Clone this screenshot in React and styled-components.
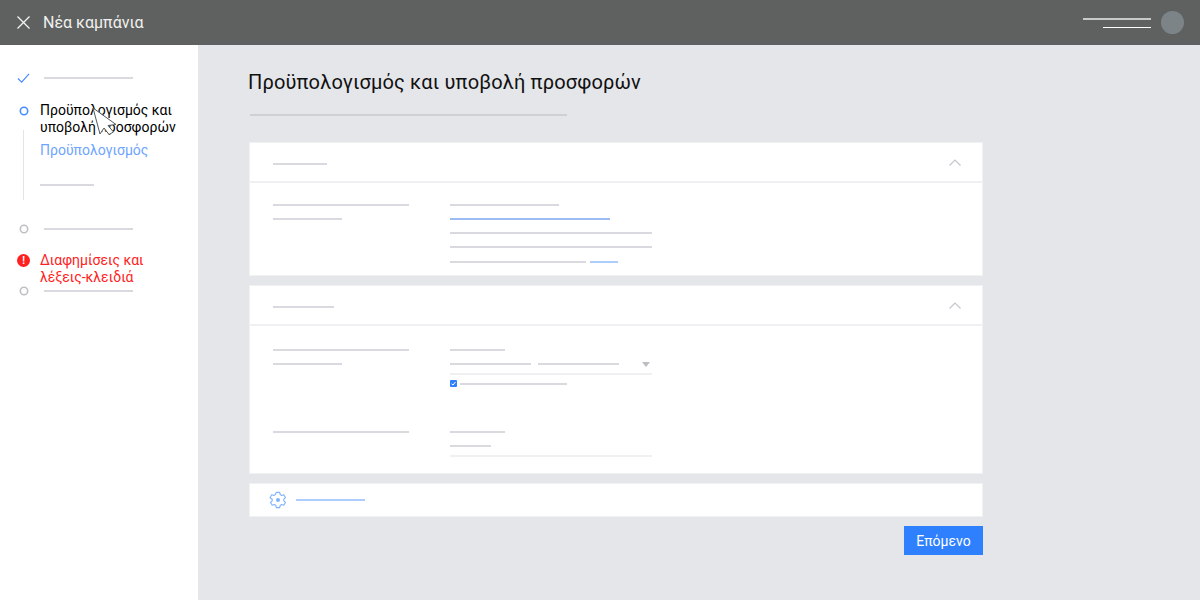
import React from 'react';
import styled, { createGlobalStyle } from 'styled-components';

const GlobalStyle = createGlobalStyle`
  html, body { margin: 0; padding: 0; height: 100%; }
  body { font-family: Roboto, "Liberation Sans", sans-serif; background: #e5e6ea; }
`;

const Page = styled.div`
  position: relative;
  width: 1200px;
  height: 600px;
  overflow: hidden;
  display: flex;
  flex-direction: column;
`;

const TopBar = styled.header`
  height: 45px;
  flex: none;
  background: #5f6160;
  display: flex;
  align-items: center;
  padding: 0 16px;
`;

const BarTitle = styled.div`
  margin-left: 12px;
  color: #f0f0ee;
  font-size: 16px;
`;

const Account = styled.div`
  margin-left: auto;
  display: flex;
  align-items: center;
  gap: 10px;
`;

const AccountLines = styled.div`
  display: flex;
  flex-direction: column;
  align-items: flex-end;
  gap: 7px;
`;

const Avatar = styled.div`
  width: 23px;
  height: 23px;
  border-radius: 50%;
  background: #7d8487;
`;

const Body = styled.div`
  flex: 1;
  display: flex;
  min-height: 0;
`;

const Sidebar = styled.aside`
  width: 198px;
  flex: none;
  background: #fff;
  padding: 23px 0 0 17px;
  box-sizing: border-box;
`;

const Step = styled.div`
  display: flex;
  align-items: ${p => (p.$multi ? 'flex-start' : 'center')};
  height: ${p => (p.$multi ? 34 : 20)}px;
  margin-top: ${p => p.$top || 0}px;
`;

const StepIcon = styled.div`
  width: 13px;
  height: ${p => (p.$multi ? 17 : 20)}px;
  flex: none;
  display: flex;
  align-items: center;
  justify-content: center;
`;

const ErrorDot = styled.span`
  width: 13px;
  height: 13px;
  border-radius: 50%;
  background: #ff2121;
  color: #fff;
  font-size: 10px;
  font-weight: 700;
  line-height: 13px;
  text-align: center;
`;

const StepLabel = styled.div`
  margin-left: 10px;
  font-size: 14px;
  line-height: 17px;
  color: ${p => p.$color || '#000'};
  white-space: nowrap;
`;

const StepLine = styled.div`
  margin-left: 14px;
`;

const SubSteps = styled.div`
  margin: -6px 0 0 6px;
  height: 70px;
  border-left: 1px solid #e3e4e8;
  padding-left: 16px;
  box-sizing: border-box;
`;

const SubLabel = styled.div`
  padding-top: 12px;
  font-size: 14px;
  line-height: 17px;
  color: #6ea4ff;
  margin-bottom: 25px;
`;

const Main = styled.main`
  flex: 1;
  padding: 24px 0 0 50px;
  min-width: 0;
`;

const Title = styled.h1`
  margin: 0 0 18px;
  font-size: 20px;
  font-weight: 400;
  line-height: 27px;
  color: #111;
  letter-spacing: 0.15px;
`;

const Skel = styled.div`
  height: ${p => p.$h || 2}px;
  width: ${p => p.$w}px;
  background: ${p => p.$color || '#d9d9df'};
  flex: none;
`;

const SubtitleLine = styled(Skel)`
  margin: 0 0 26px 2px;
`;

const Card = styled.section`
  width: 734px;
  margin: 0 0 ${p => p.$gap || 10}px 1px;
  background: #fff;
  box-sizing: border-box;
  border: 1px solid #f0f1f3;
`;

const CardHead = styled.div`
  height: ${p => p.$h}px;
  box-sizing: border-box;
  display: flex;
  align-items: center;
  justify-content: space-between;
  padding: 3px 20px 0 23px;
  border-bottom: 2px solid #f0f0f2;
`;

const Field = styled.div`
  display: grid;
  grid-template-columns: 177px 202px;
  padding: ${p => p.$top}px 0 ${p => p.$bottom || 0}px 23px;
`;

const Stack = styled.div`
  display: flex;
  flex-direction: column;
  gap: ${p => p.$gap || 12}px;
`;

const Row = styled.div`
  display: flex;
  align-items: center;
  gap: ${p => p.$gap || 0}px;
`;

const LinkRow = styled(Row)`
  margin-top: 1px;
`;

const SelectRow = styled(Row)`
  align-items: flex-start;
  padding-bottom: 6px;
  border-bottom: 2px solid #f0f0f2;
  margin-bottom: -7px;
`;

const Caret = styled.span`
  margin: -1px 2px 0 auto;
  width: 0;
  height: 0;
  border: 4.5px solid transparent;
  border-bottom: 0;
  border-top: 5px solid #bdbdc3;
`;

const CheckBox = styled.span`
  width: 7px;
  height: 7px;
  background: #2f80ff;
  border-radius: 1px;
  display: flex;
  align-items: center;
  justify-content: center;
  flex: none;
`;

const Underline = styled.div`
  border-bottom: 2px solid #f0f0f2;
  padding-bottom: 8px;
`;

const FooterCard = styled(Card)`
  height: 34px;
  display: flex;
  align-items: center;
  gap: 9px;
  padding-left: 19px;
  margin-bottom: 9px;
`;

const Actions = styled.div`
  width: 734px;
  margin-left: 1px;
  display: flex;
  justify-content: flex-end;
`;

const NextButton = styled.button`
  width: 79px;
  height: 29px;
  padding: 0;
  border: 0;
  background: #2f80ff;
  color: #fff;
  font-family: Roboto, "Liberation Sans", sans-serif;
  font-size: 14px;
`;

const CursorIcon = styled.svg`
  position: absolute;
  left: 90px;
  top: 105px;
`;

const ChevronSvg = styled.svg`
  margin-top: -3px;
`;

const RingDot = ({ color }) => (
  <svg width="10" height="10" viewBox="0 0 10 10" fill="none" stroke={color} strokeWidth="1.6">
    <circle cx="5" cy="5" r="3.7" />
  </svg>
);

const CloseIcon = () => (
  <svg width="15" height="15" viewBox="0 0 15 15" fill="none" stroke="#f4f4f2" strokeWidth="1.3">
    <path d="M1.5 1.5 L13.5 13.5 M13.5 1.5 L1.5 13.5" />
  </svg>
);

const CheckIcon = () => (
  <svg width="14" height="12" viewBox="0 0 14 12" fill="none" stroke="#4a8dff" strokeWidth="1.3">
    <path d="M1 6.5 L5 10.5 L13 1.5" />
  </svg>
);

const ChevronUp = () => (
  <ChevronSvg width="14" height="9" viewBox="0 0 14 9" fill="none" stroke="#c4c6cc" strokeWidth="1.2">
    <path d="M1.5 7.5 L7 2 L12.5 7.5" />
  </ChevronSvg>
);

const GearIcon = () => (
  <svg width="18" height="18" viewBox="0 0 18 18" fill="none" stroke="#7fb1ff" strokeWidth="1.1">
    <path d="M7.3 1.4h3.4l.5 2.2 1.4.8 2.2-.7 1.7 3-1.7 1.5v1.6l1.7 1.5-1.7 3-2.2-.7-1.4.8-.5 2.2H7.3l-.5-2.2-1.4-.8-2.2.7-1.7-3 1.7-1.5V8.2L1 6.7l1.7-3 2.2.7 1.4-.8z" strokeLinejoin="round" />
    <circle cx="9" cy="9" r="2" fill="#7fb1ff" stroke="none" />
  </svg>
);

const TinyCheck = () => (
  <svg width="5" height="5" viewBox="0 0 5 5" fill="none" stroke="#fff" strokeWidth="1">
    <path d="M0.5 2.8 L2 4 L4.5 1" />
  </svg>
);

const Cursor = () => (
  <CursorIcon width="30" height="34" viewBox="0 0 30 34">
    <path d="M3 3 L26 19.5 L18 20.5 L23.5 27 L19 29.5 L14 23 L10 29 Z" fill="#fff" stroke="#55585a" strokeWidth="1" />
  </CursorIcon>
);

const App = () => (
  <Page>
    <GlobalStyle />
    <TopBar>
      <CloseIcon />
      <BarTitle>Νέα καμπάνια</BarTitle>
      <Account>
        <AccountLines>
          <Skel $w={68} $color="#c9cac7" />
          <Skel $w={48} $h={1} $color="#fff" />
        </AccountLines>
        <Avatar />
      </Account>
    </TopBar>
    <Body>
      <Sidebar>
        <Step>
          <StepIcon><CheckIcon /></StepIcon>
          <StepLine><Skel $w={89} /></StepLine>
        </Step>
        <Step $multi $top={14}>
          <StepIcon $multi><RingDot color="#4a8dff" /></StepIcon>
          <StepLabel>Προϋπολογισμός και<br />υποβολή προσφορών</StepLabel>
        </Step>
        <SubSteps>
          <SubLabel>Προϋπολογισμός</SubLabel>
          <Skel $w={54} />
        </SubSteps>
        <Step $top={19}>
          <StepIcon><RingDot color="#bfc0c6" /></StepIcon>
          <StepLine><Skel $w={89} /></StepLine>
        </Step>
        <Step $multi $top={13}>
          <StepIcon $multi><ErrorDot>!</ErrorDot></StepIcon>
          <StepLabel $color="#ff2121">Διαφημίσεις και<br />λέξεις-κλειδιά</StepLabel>
        </Step>
        <Step $top={-5}>
          <StepIcon><RingDot color="#bfc0c6" /></StepIcon>
          <StepLine><Skel $w={89} /></StepLine>
        </Step>
      </Sidebar>
      <Main>
        <Title>Προϋπολογισμός και υποβολή προσφορών</Title>
        <SubtitleLine $w={317} $color="#cfd0d4" />

        <Card $gap={9}>
          <CardHead $h={40}>
            <Skel $w={54} />
            <ChevronUp />
          </CardHead>
          <Field $top={21} $bottom={12}>
            <Stack>
              <Skel $w={136} />
              <Skel $w={69} />
            </Stack>
            <Stack>
              <Skel $w={109} />
              <Skel $w={160} $color="#9bbcf5" />
              <Skel $w={202} />
              <Skel $w={202} />
              <LinkRow $gap={4}>
                <Skel $w={136} />
                <Skel $w={28} $color="#aecdff" />
              </LinkRow>
            </Stack>
          </Field>
        </Card>

        <Card $gap={9}>
          <CardHead $h={40}>
            <Skel $w={61} />
            <ChevronUp />
          </CardHead>
          <Field $top={23}>
            <Stack>
              <Skel $w={136} />
              <Skel $w={69} />
            </Stack>
            <Stack>
              <Skel $w={55} />
              <SelectRow $gap={7}>
                <Skel $w={81} />
                <Skel $w={81} />
                <Caret />
              </SelectRow>
              <Row $gap={3}>
                <CheckBox><TinyCheck /></CheckBox>
                <Skel $w={107} />
              </Row>
            </Stack>
          </Field>
          <Field $top={44} $bottom={16}>
            <Stack>
              <Skel $w={136} />
            </Stack>
            <Stack>
              <Skel $w={55} />
              <Underline><Skel $w={41} /></Underline>
            </Stack>
          </Field>
        </Card>

        <FooterCard>
          <GearIcon />
          <Skel $w={69} $color="#aecdff" />
        </FooterCard>
        <Actions>
          <NextButton>Επόμενο</NextButton>
        </Actions>
      </Main>
    </Body>
    <Cursor />
  </Page>
);

export default App;
